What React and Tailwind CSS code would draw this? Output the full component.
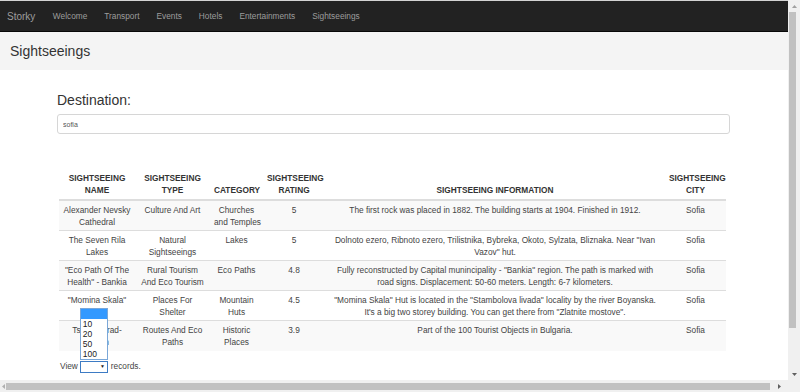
import { useState } from 'react'

const navLinks = ['Welcome', 'Transport', 'Events', 'Hotels', 'Entertainments', 'Sightseeings']

const columns = [
  { key: 'name', lines: ['Sightseeing', 'Name'], w: 'w-[76px]' },
  { key: 'type', lines: ['Sightseeing', 'Type'], w: 'w-[75px]' },
  { key: 'category', lines: ['Category'], w: 'w-[53px]' },
  { key: 'rating', lines: ['Sightseeing', 'Rating'], w: 'w-[62px]' },
  { key: 'info', lines: ['Sightseeing Information'], w: 'w-[340px]' },
  { key: 'city', lines: ['Sightseeing', 'City'], w: 'w-[61px]' },
]

const rows = [
  {
    id: 1,
    name: ['Alexander Nevsky', 'Cathedral'],
    type: ['Culture And Art'],
    category: ['Churches', 'and Temples'],
    rating: ['5'],
    info: ['The first rock was placed in 1882. The building starts at 1904. Finished in 1912.'],
    city: ['Sofia'],
  },
  {
    id: 2,
    name: ['The Seven Rila', 'Lakes'],
    type: ['Natural', 'Sightseeings'],
    category: ['Lakes'],
    rating: ['5'],
    info: ['Dolnoto ezero, Ribnoto ezero, Trilistnika, Bybreka, Okoto, Sylzata, Bliznaka. Near "Ivan', 'Vazov" hut.'],
    city: ['Sofia'],
  },
  {
    id: 3,
    name: ['"Eco Path Of The', 'Health" - Bankia'],
    type: ['Rural Tourism', 'And Eco Tourism'],
    category: ['Eco Paths'],
    rating: ['4.8'],
    info: [
      'Fully reconstructed by Capital munincipality - "Bankia" region. The path is marked with',
      'road signs. Displacement: 50-60 meters. Length: 6-7 kilometers.',
    ],
    city: ['Sofia'],
  },
  {
    id: 4,
    name: ['"Momina Skala"'],
    type: ['Places For', 'Shelter'],
    category: ['Mountain', 'Huts'],
    rating: ['4.5'],
    info: [
      '"Momina Skala" Hut is located in the "Stambolova livada" locality by the river Boyanska.',
      'It\'s a big two storey building. You can get there from "Zlatnite mostove".',
    ],
    city: ['Sofia'],
  },
  {
    id: 5,
    name: ['Tsarski Grad-', 'Boyan'],
    type: ['Routes And Eco', 'Paths'],
    category: ['Historic', 'Places'],
    rating: ['3.9'],
    info: ['Part of the 100 Tourist Objects in Bulgaria.'],
    city: ['Sofia'],
  },
]

const pageOptions = ['', '10', '20', '50', '100']

export default function App() {
  const [destination, setDestination] = useState('sofia')

  return (
    <div className="w-[800px] h-[392px] flex flex-col overflow-hidden bg-white text-[#333] font-['Liberation_Sans',Arial,sans-serif]">
      <div className="flex flex-1 min-h-0">
        <div className="flex-1 min-w-0 flex flex-col border-t border-[#d4d4d4]">
          {/* Navbar */}
          <nav className="h-[31px] shrink-0 flex items-center bg-[#222] border-b border-[#080808]">
            <span className="pl-[7px] pr-[9px] text-[10px] text-[#9d9d9d]">Storky</span>
            {navLinks.map((link) => (
              <span key={link} className="px-[8.5px] text-[8.3px] text-[#9d9d9d]">{link}</span>
            ))}
          </nav>

          {/* Page header */}
          <div className="h-[38px] shrink-0 bg-[#f4f4f4] pl-[10px] pt-[11px]">
            <h1 className="text-[14px] leading-[16px] text-[#333]">Sightseeings</h1>
          </div>

          {/* Content */}
          <div className="pl-[57px] w-[730px]">
            <label className="block mt-[22px] text-[14px] leading-[16px] text-[#333]">Destination:</label>
            <input
              value={destination}
              onChange={(e) => setDestination(e.target.value)}
              className="mt-[6px] w-[673px] h-[20px] block border border-[#d6d6d6] rounded-[3px] px-[5px] text-[7px] text-[#555] outline-none"
            />

            <table className="mt-[38px] ml-[2px] w-[667px] table-fixed border-collapse text-[8.3px] leading-[12px]">
              <colgroup>
                {columns.map((c) => (
                  <col key={c.key} className={c.w} />
                ))}
              </colgroup>
              <thead>
                <tr>
                  {columns.map((c) => (
                    <th key={c.key} className="px-1 pb-[3px] align-bottom text-center font-bold uppercase text-[#333] border-b-2 border-[#ddd]">
                      {c.lines.map((l) => (
                        <div key={l} className="whitespace-nowrap">{l}</div>
                      ))}
                    </th>
                  ))}
                </tr>
              </thead>
              <tbody>
                {rows.map((row, i) => (
                  <tr key={row.id} className={i % 2 === 0 ? 'bg-[#f9f9f9]' : 'bg-white'}>
                    {columns.map((c) => (
                      <td
                        key={c.key}
                        className={`h-[30px] px-1 pt-[3px] pb-[2px] align-top text-center text-[#444] ${i > 0 ? 'border-t border-[#ddd]' : ''}`}
                      >
                        {row[c.key].map((l) => (
                          <div key={l} className="whitespace-nowrap">{l}</div>
                        ))}
                      </td>
                    ))}
                  </tr>
                ))}
              </tbody>
            </table>

            {/* Page size */}
            <div className="mt-[10px] ml-[3px] flex items-center h-[12px] text-[8.3px] text-[#444]">
              <span>View</span>
              <div className="relative ml-[2px]">
                <div className="absolute bottom-full left-0 mb-[1px] w-[28px] bg-white border border-[#7aa7d8] text-[8.5px] leading-[10px] text-[#222]">
                  {pageOptions.map((o) => (
                    <div key={o || 'empty'} className={`h-[10px] pl-[2px] ${o === '' ? 'bg-[#3399ff]' : ''}`}>{o}</div>
                  ))}
                </div>
                <div className="w-[28px] h-[12px] border border-[#3d7bc4] bg-white flex items-center justify-end pr-[2px]">
                  <span className="text-[5px] text-[#222]">▼</span>
                </div>
              </div>
              <span className="ml-[3px]">records.</span>
            </div>
          </div>
        </div>

        {/* Vertical scrollbar */}
        <div className="w-[12px] shrink-0 bg-[#f0f0f0] flex flex-col">
          <div className="h-[12px] flex items-center justify-center">
            <svg width="5" height="3" viewBox="0 0 5 3"><path d="M0 3L2.5 0L5 3Z" fill="#a0a0a0" /></svg>
          </div>
          <div className="ml-[1px] w-[7px] h-[316px] bg-[#c1c1c1]" />
          <div className="flex-1" />
          <div className="h-[12px] flex items-center justify-center">
            <svg width="5" height="3" viewBox="0 0 5 3"><path d="M0 0L2.5 3L5 0Z" fill="#606060" /></svg>
          </div>
        </div>
      </div>

      {/* Horizontal scrollbar */}
      <div className="h-[12px] shrink-0 flex bg-[#f0f0f0]">
        <div className="w-[6px] flex items-center justify-center">
          <svg width="3" height="5" viewBox="0 0 3 5"><path d="M3 0L0 2.5L3 5Z" fill="#b0b0b0" /></svg>
        </div>
        <div className="mt-[3px] w-[764px] h-[7px] bg-[#c1c1c1]" />
        <div className="flex-1 flex items-center justify-center">
          <svg width="3" height="5" viewBox="0 0 3 5"><path d="M0 0L3 2.5L0 5Z" fill="#606060" /></svg>
        </div>
        <div className="w-[12px] bg-[#f0f0f0]" />
      </div>
    </div>
  )
}
